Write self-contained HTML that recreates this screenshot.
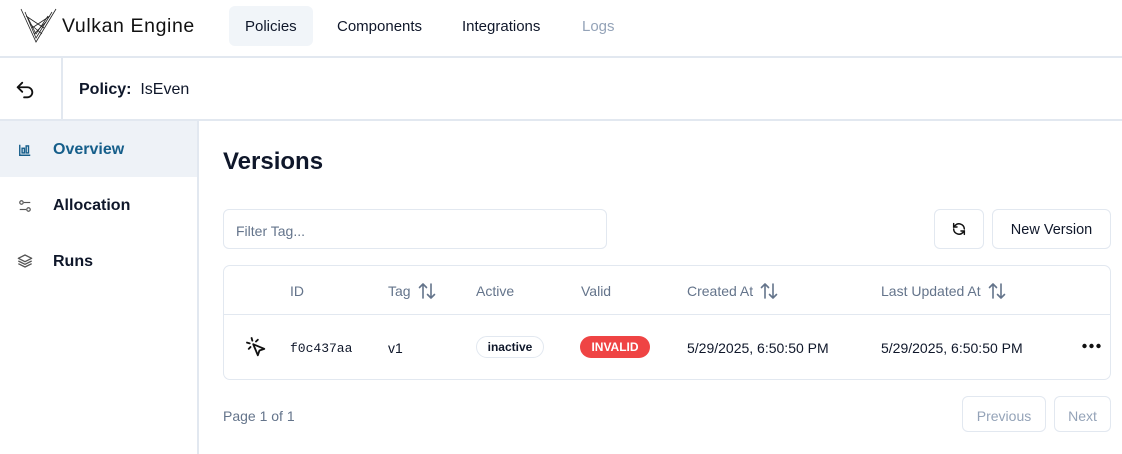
<!DOCTYPE html>
<html><head><meta charset="utf-8"><style>
*{box-sizing:border-box;margin:0;padding:0}
body{width:1122px;height:453px;overflow:hidden;background:#fff;font-family:"Liberation Sans",sans-serif;color:#0f172a;position:relative}
.abs{position:absolute}
.nav{left:0;top:0;width:1122px;height:58px;border-bottom:2px solid #e2e8f0}
.navi{position:absolute;top:6px;height:40px;line-height:42px;font-size:15px;padding:0 16px;border-radius:6px;color:#0f172a}
.hdr{left:0;top:58px;width:1122px;height:63px;border-bottom:2px solid #e2e8f0}
.side{left:0;top:121px;width:199px;height:333px;border-right:2px solid #e2e8f0}
.si{position:absolute;left:0;width:197px;height:56px;font-size:16px;font-weight:bold;line-height:58px;padding-left:53px}
.btn{position:absolute;border:1px solid #e2e8f0;border-radius:6px;font-size:14px;text-align:center}
.th{position:absolute;top:280px;height:22px;display:flex;align-items:center;font-size:14px;color:#64748b;white-space:nowrap}
.th svg{margin-left:6px}
.td{position:absolute;top:340px;font-size:14px;color:#0f172a}
</style></head><body>
<svg width="0" height="0" style="position:absolute"><symbol id="ar" viewBox="0 0 20 20"><g fill="none" stroke="#64748b" stroke-width="1.6" stroke-linecap="round" stroke-linejoin="round"><path d="M6 17V3M2.5 6.5 6 3l3.5 3.5"/><path d="M14 3v14M10.5 13.5 14 17l3.5-3.5"/></g></symbol></svg>
<div class="abs nav">
<svg class="abs" style="left:20px;top:8px" width="38" height="36" viewBox="0 0 38 36"><g stroke="#222" stroke-width="0.8" fill="none"><path d="M1 1 L16 34 L36 1"/><path d="M5 4 L16 30 L32 4"/><path d="M8 10 L16 26 L28 8"/><path d="M6 8 L24 20 M30 8 L12 20 M10 16 L22 26 M26 14 L14 26"/></g></svg>
<div class="abs" style="left:62px;top:15px;font-size:19.5px;color:#111;letter-spacing:0.6px">Vulkan Engine</div>
<div class="navi" style="left:229px;background:#f1f5f9;width:84px">Policies</div>
<div class="navi" style="left:321px">Components</div>
<div class="navi" style="left:446px">Integrations</div>
<div class="navi" style="left:566px;color:#94a3b8">Logs</div>
</div>
<div class="abs hdr">
<div class="abs" style="left:61px;top:0;width:2px;height:63px;background:#e2e8f0"></div>
<svg class="abs" style="left:14px;top:21px" width="22" height="22" viewBox="0 0 24 24" fill="none" stroke="#111" stroke-width="2" stroke-linecap="round" stroke-linejoin="round"><path d="M9 14 4 9l5-5"/><path d="M4 9h10.5a5.5 5.5 0 0 1 0 11H11"/></svg>
<div class="abs" style="left:79px;top:23px;font-size:16px"><b>Policy:</b>&nbsp; IsEven</div>
</div>
<div class="abs side">
<div class="si" style="top:0;background:#eef2f7;color:#155e8a">Overview</div>
<svg class="abs" style="left:18px;top:22px" width="14" height="14" viewBox="0 0 24 24" fill="none" stroke="#155e8a" stroke-width="2.4"><path d="M3 3v18h18"/><rect x="7" y="9" width="4" height="8"/><rect x="14" y="5" width="4" height="12"/></svg>
<div class="si" style="top:56px">Allocation</div>
<svg class="abs" style="left:18px;top:78px" width="14" height="14" viewBox="0 0 24 24" fill="none" stroke="#555" stroke-width="2"><circle cx="6" cy="6" r="3"/><path d="M10 6h11"/><circle cx="18" cy="18" r="3"/><path d="M3 18h11"/></svg>
<div class="si" style="top:112px">Runs</div>
<svg class="abs" style="left:17px;top:132px" width="16" height="16" viewBox="0 0 24 24" fill="none" stroke="#555" stroke-width="2" stroke-linejoin="round"><path d="M12 3 2 8l10 5 10-5z"/><path d="m2 12 10 5 10-5"/><path d="m2 16 10 5 10-5"/></svg>
</div>
<div class="abs" style="left:223px;top:148px;font-size:24px;font-weight:bold">Versions</div>
<div class="abs" style="left:223px;top:209px;width:384px;height:40px;border:1px solid #e2e8f0;border-radius:6px;font-size:14px;color:#64748b;padding:13px 12px">Filter Tag...</div>
<div class="btn" style="left:934px;top:209px;width:50px;height:40px"><svg style="margin-top:11px" width="16" height="16" viewBox="0 0 24 24" fill="none" stroke="#111" stroke-width="2.2" stroke-linecap="round"><path d="M20 12a8 8 0 0 0-14-5l-2 2"/><path d="M4 4v5h5"/><path d="M4 12a8 8 0 0 0 14 5l2-2"/><path d="M20 20v-5h-5"/></svg></div>
<div class="btn" style="left:992px;top:209px;width:119px;height:40px;line-height:41px;font-size:14.5px">New Version</div>
<div class="abs" style="left:223px;top:265px;width:888px;height:115px;border:1px solid #e2e8f0;border-radius:7px"></div>
<div class="abs" style="left:224px;top:314px;width:886px;height:1px;background:#e2e8f0"></div>
<div class="th" style="left:290px">ID</div>
<div class="th" style="left:388px">Tag<svg width="20" height="20"><use href="#ar"/></svg></div>
<div class="th" style="left:476px">Active</div>
<div class="th" style="left:581px">Valid</div>
<div class="th" style="left:687px">Created At<svg width="20" height="20"><use href="#ar"/></svg></div>
<div class="th" style="left:881px">Last Updated At<svg width="20" height="20"><use href="#ar"/></svg></div>
<svg class="abs" style="left:245px;top:336px" width="22" height="22" viewBox="0 0 24 24" fill="none" stroke="#111" stroke-width="2" stroke-linecap="round" stroke-linejoin="round"><path d="M9 9l5 12 1.8-5.2L21 14z"/><path d="M7.2 2.2 8 5.1M5.1 8 2.2 7.2M14 4.1 12 6M6 12l-1.9 2"/></svg>
<div class="td" style="left:290px;font-family:'Liberation Mono',monospace;font-size:13px;top:341px">f0c437aa</div>
<div class="td" style="left:388px">v1</div>
<div class="abs" style="left:476px;top:336px;width:68px;height:22px;border:1px solid #e2e8f0;border-radius:11px;font-size:12px;font-weight:bold;text-align:center;line-height:21px">inactive</div>
<div class="abs" style="left:580px;top:336px;width:70px;height:22px;background:#ef4444;border-radius:11px;font-size:12px;font-weight:bold;color:#fff;text-align:center;line-height:23px">INVALID</div>
<div class="td" style="left:687px">5/29/2025, 6:50:50 PM</div>
<div class="td" style="left:881px">5/29/2025, 6:50:50 PM</div>
<svg class="abs" style="left:1082px;top:343px" width="20" height="6"><circle cx="2.5" cy="3" r="2.2" fill="#111"/><circle cx="9.5" cy="3" r="2.2" fill="#111"/><circle cx="16.5" cy="3" r="2.2" fill="#111"/></svg>
<div class="abs" style="left:223px;top:408px;font-size:14px;color:#64748b">Page 1 of 1</div>
<div class="btn" style="left:962px;top:396px;width:84px;height:36px;line-height:38px;color:#94a3b8">Previous</div>
<div class="btn" style="left:1054px;top:396px;width:57px;height:36px;line-height:38px;color:#94a3b8">Next</div>
</body></html>
